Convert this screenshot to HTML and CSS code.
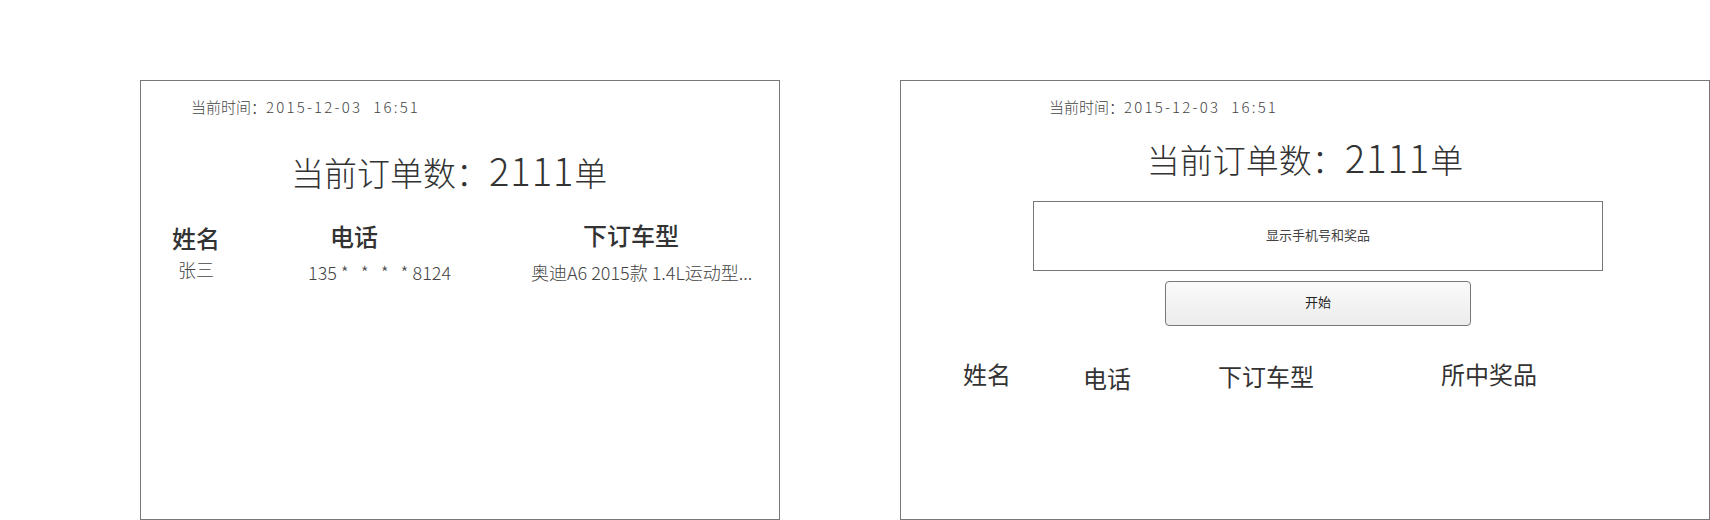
FILE: index.html
```html
<!DOCTYPE html>
<html lang="zh-CN">
<head>
<meta charset="utf-8">
<title>订单抽奖</title>
<link rel="stylesheet" href="styles.css">
</head>
<body>
<div class="stage">
  <section class="panel panel-left">
    <div class="time">当前时间：<span class="stamp">2015-12-03&nbsp;&nbsp;16:51</span></div>
    <h1 class="count count-left">当前订单数：<span class="num">2111</span>单</h1>
    <div class="table">
      <div class="th th-name">姓名</div>
      <div class="th th-phone">电话</div>
      <div class="th th-car">下订车型</div>
      <div class="td td-name">张三</div>
      <div class="td td-phone">135 *&nbsp;&nbsp; *&nbsp;&nbsp; *&nbsp;&nbsp; * 8124</div>
      <div class="td td-car">奥迪A6 2015款 1.4L运动型...</div>
    </div>
  </section>

  <section class="panel panel-right">
    <div class="time time-right">当前时间：<span class="stamp">2015-12-03&nbsp;&nbsp;16:51</span></div>
    <h1 class="count count-right">当前订单数：<span class="num">2111</span>单</h1>
    <div class="display">显示手机号和奖品</div>
    <div class="btn-row"><button class="start">开始</button></div>
    <div class="heads">
      <div class="h h1">姓名</div>
      <div class="h h2">电话</div>
      <div class="h h3">下订车型</div>
      <div class="h h4">所中奖品</div>
    </div>
  </section>
</div>
</body>
</html>
```
FILE: styles.css
```css
* { box-sizing: border-box; }
html, body { margin: 0; padding: 0; background: #fff; }
body {
  font-family: "Noto Sans CJK SC", "Noto Sans", sans-serif;
  color: #333;
  width: 1710px;
  height: 520px;
  overflow: hidden;
}
.stage {
  display: flex;
  gap: 120px;
  padding: 80px 0 0 140px;
}
.panel {
  height: 440px;
  border: 1px solid #777;
  display: flex;
  flex-direction: column;
}
.panel-left { width: 640px; }
.panel-right { width: 810px; }

.time {
  font-size: 15px;
  line-height: 20px;
  font-weight: 300;
  color: #444;
  margin-top: 16px;
  padding-left: 50px;
  white-space: nowrap;
}
.time .stamp { letter-spacing: 2.2px; }
.time-right { padding-left: 148px; }

.count {
  margin: 0;
  font-size: 33px;
  line-height: 40px;
  font-weight: 300;
  color: #333;
  white-space: nowrap;
}
.count .num { font-size: 38px; font-weight: 300; letter-spacing: 1px; }
.count-left { margin-top: 33px; padding-left: 150px; }
.count-right { margin-top: 20px; text-align: center; }

.table {
  margin-top: 31px;
  display: grid;
  grid-template-columns: 136px 223px 1fr;
  padding-left: 31px;
  row-gap: 6px;
}
.th {
  font-size: 24px;
  line-height: 30px;
  font-weight: 500;
  color: #333;
}
.th-phone { padding-left: 22px; margin-top: -2px; }
.th-car { padding-left: 52px; margin-top: -3px; }
.td {
  font-size: 18px;
  line-height: 24px;
  font-weight: 300;
  color: #444;
  white-space: nowrap;
}
.td-name { padding-left: 6px; margin-top: -2px; }
.td-phone { margin-top: 1px; }
.td-car { margin-top: 1px; }

.display {
  margin: 22px 0 0 132px;
  width: 570px;
  height: 70px;
  border: 1px solid #777;
  display: flex;
  align-items: center;
  justify-content: center;
  font-size: 13px;
  color: #444;
  padding-bottom: 3px;
}
.btn-row {
  margin: 10px 0 0 264px;
}
.start {
  width: 306px;
  height: 45px;
  border: 1px solid #777;
  border-radius: 4px;
  background: linear-gradient(#fafafa, #ececec);
  font-family: "Noto Sans CJK SC", sans-serif;
  font-size: 13px;
  color: #222;
  padding: 0 0 4px;
}
.heads {
  margin-top: 33px;
  display: flex;
  align-items: flex-start;
  font-size: 24px;
  line-height: 30px;
  color: #333;
}
.h { white-space: nowrap; }
.h1 { margin-left: 62px; }
.h2 { margin-left: 72px; margin-top: 4px; }
.h3 { margin-left: 87px; margin-top: 2px; }
.h4 { margin-left: 127px; }
```
